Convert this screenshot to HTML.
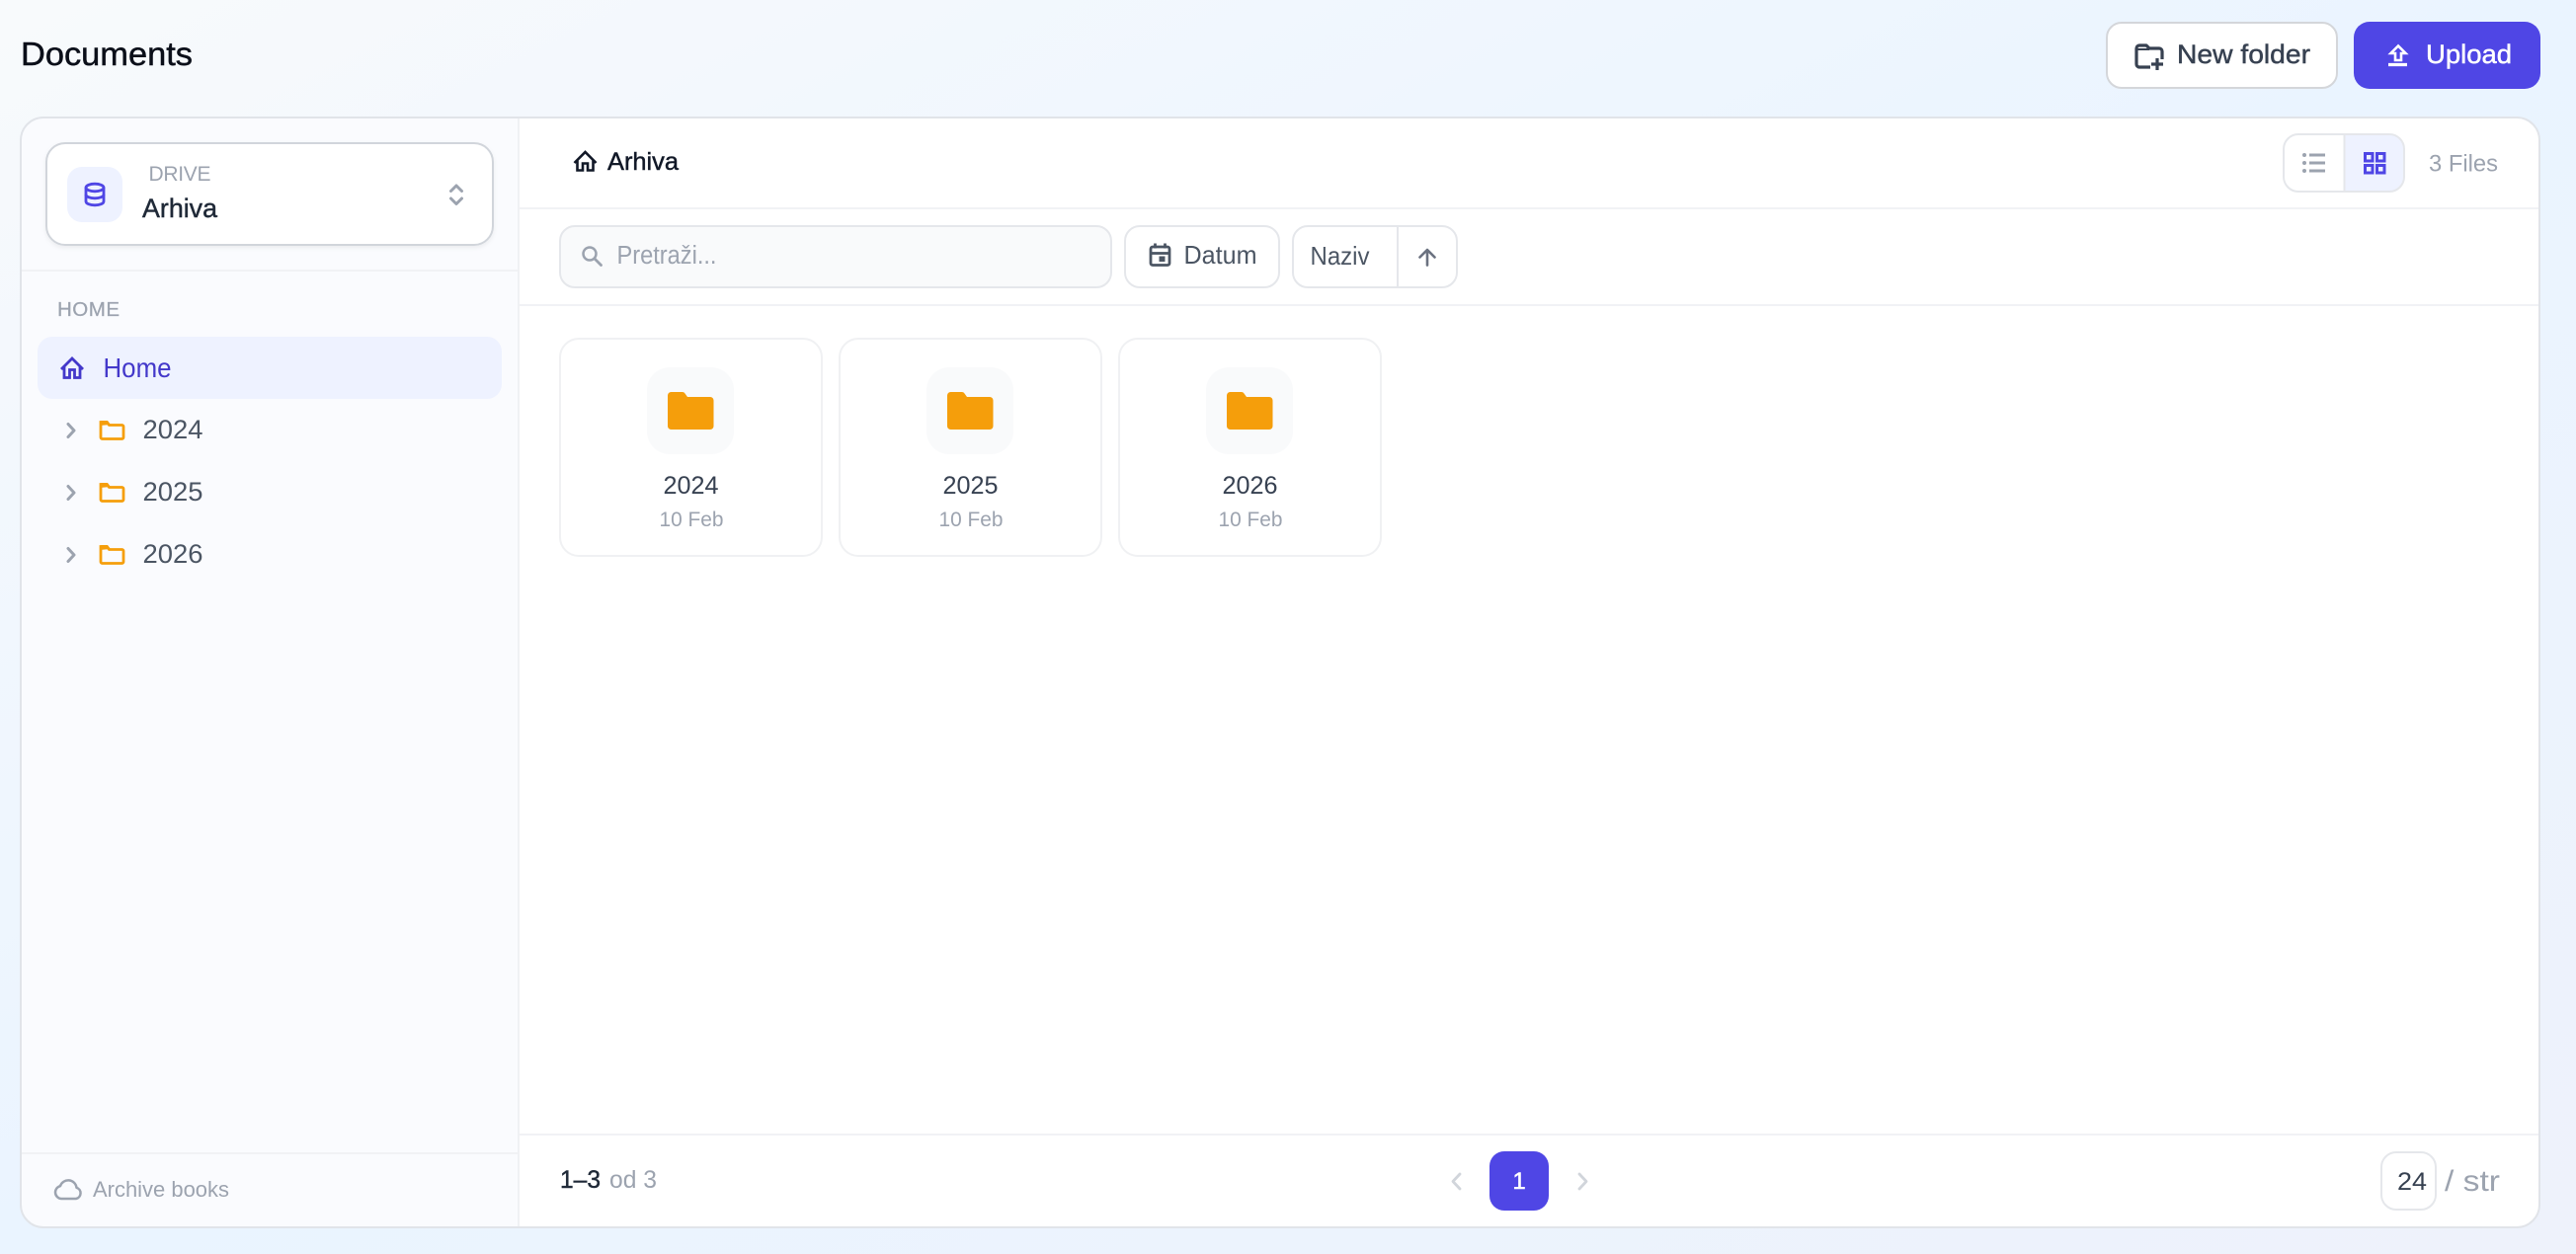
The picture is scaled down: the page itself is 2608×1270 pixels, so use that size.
<!DOCTYPE html>
<html lang="en"><head><meta charset="utf-8"><title>Documents</title>
<style>
html,body{margin:0;padding:0;width:2608px;height:1270px;overflow:hidden;background:#eef5fe}
svg{display:block}
text{font-family:"Liberation Sans",sans-serif}
.m{stroke:currentColor;stroke-width:.45px}
.ic{fill:none;stroke-linecap:round;stroke-linejoin:round}
</style></head><body>
<svg xmlns="http://www.w3.org/2000/svg" width="2608" height="1270" viewBox="0 0 2608 1270" font-size="27">
<defs>
<linearGradient id="bg" x1="0" y1="0" x2="1" y2="1">
<stop offset="0" stop-color="#f8fafc"/><stop offset=".5" stop-color="#eaf4ff"/><stop offset="1" stop-color="#eef2fb"/>
</linearGradient>
<clipPath id="panel"><rect x="21" y="119" width="2550" height="1124" rx="23"/></clipPath>
<filter id="sh" x="-5%" y="-10%" width="110%" height="125%"><feDropShadow dx="0" dy="2" stdDeviation="2" flood-color="#000" flood-opacity=".06"/></filter>
</defs>
<rect width="2608" height="1270" fill="url(#bg)"/>

<!-- Top bar -->
<text x="21" y="66" font-size="33.500" fill="#0b0f19" color="#0b0f19" class="m" textLength="174" lengthAdjust="spacingAndGlyphs">Documents</text>
<rect x="2133" y="23" width="233" height="66" rx="15" fill="#fff" stroke="#d4d6da" stroke-width="2"/>
<g stroke="#374151" stroke-width="3.200" fill="none">
<path d="M2177 68H2166a3 3 0 0 1-3-3V49a3 3 0 0 1 3-3h7l3 3h10a3 3 0 0 1 3 3v8" stroke-linejoin="round"/>
<path d="M2163 50h13" stroke-width="2"/>
<path d="M2184 59v12M2178 65h12"/>
</g>
<text x="2204" y="64" fill="#374151" color="#374151" class="m" textLength="135" lengthAdjust="spacingAndGlyphs">New folder</text>
<rect x="2383" y="22" width="189" height="68" rx="16" fill="#4f46e5"/>
<g fill="none" stroke="#fff">
<path d="M2428 46.500L2420.500 54h4.500v7h6v-7h4.500z" stroke-width="2.600"/>
<path d="M2418 65.500h19" stroke-width="3.200"/>
</g>
<text x="2456" y="64" fill="#fff" color="#fff" class="m" textLength="87" lengthAdjust="spacingAndGlyphs">Upload</text>

<!-- Panel -->
<rect x="21" y="119" width="2550" height="1124" rx="23" fill="#fff"/>
<g clip-path="url(#panel)">
<rect x="21" y="119" width="504" height="1124" fill="#fafbfe"/>
<rect x="524" y="119" width="2" height="1124" fill="#f0f1f4"/>
<rect x="21" y="273" width="503" height="2" fill="#f1f2f5"/>
<rect x="21" y="1167" width="503" height="2" fill="#f1f2f5"/>
<rect x="526" y="210" width="2045" height="2" fill="#f1f2f5"/>
<rect x="526" y="308" width="2045" height="2" fill="#f1f2f5"/>
<rect x="526" y="1148" width="2045" height="2" fill="#f1f2f5"/>
</g>
<rect x="21" y="119" width="2550" height="1124" rx="23" fill="none" stroke="#e1e4e9" stroke-width="2"/>

<!-- Drive selector -->
<rect x="47" y="145" width="452" height="103" rx="19" fill="#fff" stroke="#d1d5db" stroke-width="2" filter="url(#sh)"/>
<rect x="68" y="169" width="56" height="56" rx="15" fill="#eef2ff"/>
<g fill="none" stroke="#4f46e5" stroke-width="2.800">
<ellipse cx="96" cy="190" rx="9" ry="3.800"/>
<path d="M87 190v14c0 2.200 4 3.800 9 3.800s9-1.600 9-3.800V190"/>
<path d="M87 197c0 2.200 4 3.800 9 3.800s9-1.600 9-3.800"/>
</g>
<text x="150.500" y="183" font-size="21" fill="#9ca3af" textLength="63" lengthAdjust="spacing">DRIVE</text>
<text x="144" y="220" fill="#1f2937" color="#1f2937" class="m" textLength="76" lengthAdjust="spacingAndGlyphs">Arhiva</text>
<path d="M456.500 193.500l5.500-5.500 5.500 5.500M456.500 201l5.500 5.500 5.500-5.500" fill="none" stroke="#9ca3af" stroke-width="3" stroke-linecap="round" stroke-linejoin="round"/>

<!-- Tree -->
<text x="58" y="320" font-size="20.500" fill="#9ca3af" color="#9ca3af" class="m" style="stroke-width:.25px" textLength="63" lengthAdjust="spacing">HOME</text>
<rect x="38" y="341" width="470" height="63" rx="15" fill="#eef2ff"/>
<path d="M62 374l11-11 11 11M65 371v11.500h5.500v-8h5v8H81V371" fill="none" stroke="#4338ca" stroke-width="2.800" stroke-linejoin="miter"/>
<text x="104.500" y="382" font-size="27.500" fill="#4338ca" textLength="69" lengthAdjust="spacingAndGlyphs">Home</text>

<g id="r">
<path d="M69 429.500l6 6.500-6 6.500" fill="none" stroke="#9ca3af" stroke-width="3" stroke-linecap="round" stroke-linejoin="round"/>
<path d="M102 427.500h6l2.500 3h13a1.500 1.500 0 0 1 1.500 1.500v11a1.500 1.500 0 0 1-1.500 1.500h-20a1.500 1.500 0 0 1-1.500-1.500z" fill="none" stroke="#f59e0b" stroke-width="2.800"/>
<path d="M101 431v-3a2 2 0 0 1 2-2h6l3 4z" fill="#f59e0b"/>
</g>
<text x="144.500" y="444" fill="#4b5563" font-size="27" textLength="61" lengthAdjust="spacingAndGlyphs">2024</text>
<use href="#r" y="63"/>
<text x="144.500" y="507" fill="#4b5563" font-size="27" textLength="61" lengthAdjust="spacingAndGlyphs">2025</text>
<use href="#r" y="126"/>
<text x="144.500" y="570" fill="#4b5563" font-size="27" textLength="61" lengthAdjust="spacingAndGlyphs">2026</text>

<!-- Sidebar footer -->
<path d="M62 1214a6.500 6.500 0 0 1-1-12.800 8.500 8.500 0 0 1 16.500 1.600 5.800 5.800 0 0 1-.5 11.200z" fill="none" stroke="#9ca3af" stroke-width="2.500" stroke-linejoin="round"/>
<text x="94" y="1212" font-size="22" fill="#9ca3af" textLength="138" lengthAdjust="spacingAndGlyphs">Archive books</text>

<!-- Breadcrumb -->
<path d="M581.500 165l11-11 11 11M584.500 162v10.500h5.500v-7h5v7h5.500V162" fill="none" stroke="#111827" stroke-width="2.600"/>
<text x="615" y="172" font-size="25" fill="#111827" color="#111827" class="m" textLength="72" lengthAdjust="spacingAndGlyphs">Arhiva</text>

<!-- View toggle -->
<rect x="2312" y="136" width="122" height="58" rx="15" fill="#fff"/>
<path d="M2373 136h46a15 15 0 0 1 15 15v28a15 15 0 0 1-15 15h-46z" fill="#eef2ff"/>
<rect x="2312" y="136" width="122" height="58" rx="15" fill="none" stroke="#e5e7eb" stroke-width="2"/>
<rect x="2372.500" y="136" width="2" height="58" fill="#e5e7eb"/>
<g fill="#9ca3af"><circle cx="2333" cy="157" r="2"/><circle cx="2333" cy="165" r="2"/><circle cx="2333" cy="173" r="2"/>
<rect x="2338" y="155.500" width="16" height="3"/><rect x="2338" y="163.500" width="16" height="3"/><rect x="2338" y="171.500" width="16" height="3"/></g>
<g fill="none" stroke="#4f46e5" stroke-width="3"><rect x="2394.500" y="155.500" width="7.500" height="7.500"/><rect x="2406.500" y="155.500" width="7.500" height="7.500"/><rect x="2394.500" y="167.500" width="7.500" height="7.500"/><rect x="2406.500" y="167.500" width="7.500" height="7.500"/></g>
<text x="2459" y="173.500" font-size="24.500" fill="#9ca3af" textLength="70" lengthAdjust="spacingAndGlyphs">3 Files</text>

<!-- Toolbar -->
<rect x="567" y="229" width="558" height="62" rx="15" fill="#f9fafb" stroke="#e5e7eb" stroke-width="2"/>
<circle cx="597" cy="257" r="6.500" fill="none" stroke="#9ca3af" stroke-width="2.500"/>
<path d="M602 262l6.500 6.500" stroke="#9ca3af" stroke-width="2.800" stroke-linecap="round"/>
<text x="624.500" y="267" font-size="25.500" fill="#9ca3af" textLength="101" lengthAdjust="spacingAndGlyphs">Pretraži...</text>

<rect x="1139" y="229" width="156" height="62" rx="15" fill="#fff" stroke="#e5e7eb" stroke-width="2"/>
<g fill="none" stroke="#4b5563" stroke-width="2.800"><rect x="1165" y="250" width="19" height="18.500" rx="2"/><path d="M1165 256.500h19M1169.500 246.500v5M1179.500 246.500v5"/></g>
<rect x="1173.500" y="259.500" width="6" height="5.500" fill="#4b5563"/>
<text x="1198.500" y="267" font-size="26" fill="#4b5563" textLength="74" lengthAdjust="spacingAndGlyphs">Datum</text>

<rect x="1309" y="229" width="166" height="62" rx="15" fill="#fff" stroke="#e5e7eb" stroke-width="2"/>
<rect x="1414" y="229" width="2" height="62" fill="#e5e7eb"/>
<text x="1326.500" y="268" font-size="26" fill="#4b5563" textLength="60" lengthAdjust="spacingAndGlyphs">Naziv</text>
<path d="M1445 268.500v-15.500M1437.500 260.500l7.500-7.500 7.500 7.500" fill="none" stroke="#6b7280" stroke-width="2.600" stroke-linecap="round" stroke-linejoin="round"/>

<!-- Cards -->
<g id="c">
<rect x="567" y="343" width="265" height="220" rx="19" fill="#fff" stroke="#f0f1f3" stroke-width="2"/>
<rect x="655" y="372" width="88" height="88" rx="23" fill="#f9fafb"/>
<path d="M676 400.500a3.500 3.500 0 0 1 3.500-3.500h11.500a3 3 0 0 1 2.500 1.500l2.500 3.500h23a3.500 3.500 0 0 1 3.500 3.500v26a3.500 3.500 0 0 1-3.500 3.500h-39.500a3.500 3.500 0 0 1-3.500-3.500z" fill="#f59e0b"/>
</g>
<use href="#c" x="283"/><use href="#c" x="566"/>
<g text-anchor="middle">
<text x="699.500" y="500" font-size="25" fill="#374151" textLength="56" lengthAdjust="spacingAndGlyphs">2024</text>
<text x="982.500" y="500" font-size="25" fill="#374151" textLength="56" lengthAdjust="spacingAndGlyphs">2025</text>
<text x="1265.500" y="500" font-size="25" fill="#374151" textLength="56" lengthAdjust="spacingAndGlyphs">2026</text>
<text x="700" y="533" font-size="21.500" fill="#9ca3af" textLength="65" lengthAdjust="spacingAndGlyphs">10 Feb</text>
<text x="983" y="533" font-size="21.500" fill="#9ca3af" textLength="65" lengthAdjust="spacingAndGlyphs">10 Feb</text>
<text x="1266" y="533" font-size="21.500" fill="#9ca3af" textLength="65" lengthAdjust="spacingAndGlyphs">10 Feb</text>
</g>

<!-- Footer -->
<text x="567" y="1203" font-size="25" fill="#1f2937" color="#1f2937" class="m" textLength="41" lengthAdjust="spacingAndGlyphs">1–3</text>
<text x="617" y="1203" font-size="25" fill="#9ca3af" textLength="48" lengthAdjust="spacingAndGlyphs">od 3</text>
<path d="M1478 1189l-7 7.500 7 7.500" fill="none" stroke="#d1d5db" stroke-width="2.800" stroke-linecap="round" stroke-linejoin="round"/>
<rect x="1508" y="1166" width="60" height="60" rx="15" fill="#4f46e5"/>
<text x="1538" y="1204" font-size="24" fill="#fff" color="#fff" class="m" text-anchor="middle">1</text>
<path d="M1599 1189l7 7.500-7 7.500" fill="none" stroke="#d1d5db" stroke-width="2.800" stroke-linecap="round" stroke-linejoin="round"/>
<rect x="2411" y="1167" width="55" height="58" rx="15" fill="#fff" stroke="#e5e7eb" stroke-width="2"/>
<text x="2442" y="1205" font-size="25" fill="#374151" text-anchor="middle" textLength="30" lengthAdjust="spacingAndGlyphs">24</text>
<text x="2475" y="1206" font-size="30" fill="#9ca3af" textLength="56" lengthAdjust="spacingAndGlyphs">/ str</text>
</svg>
</body></html>
